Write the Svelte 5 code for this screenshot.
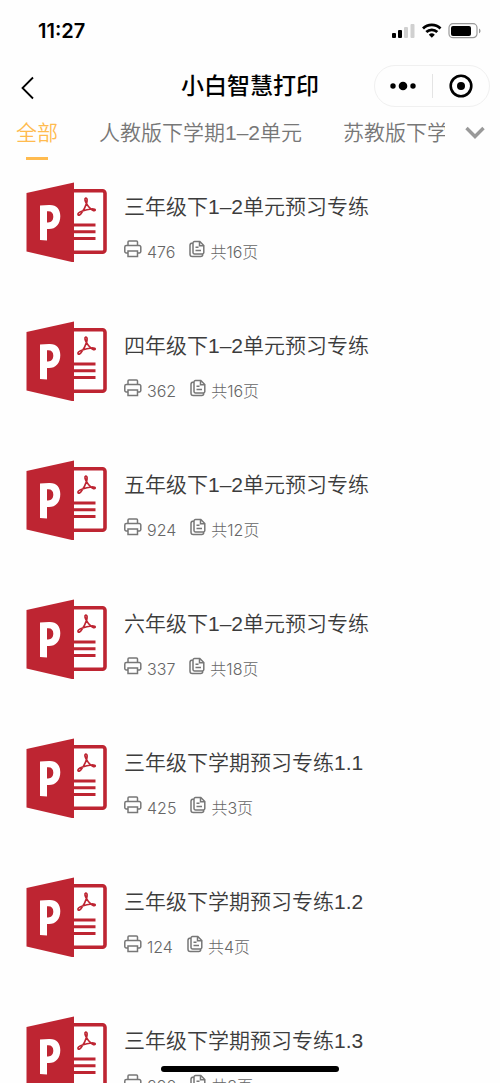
<script lang="ts">
	interface Doc {
		title: string,
		prints: number,
		pages: number,
	}

	const tabs = ['全部', '人教版下学期1–2单元', '苏教版下学期1–2单元'];
	let active = $state(0);

	const docs: Doc[] = [
		{ title: '三年级下1–2单元预习专练', prints: 476, pages: 16 },
		{ title: '四年级下1–2单元预习专练', prints: 362, pages: 16 },
		{ title: '五年级下1–2单元预习专练', prints: 924, pages: 12 },
		{ title: '六年级下1–2单元预习专练', prints: 337, pages: 18 },
		{ title: '三年级下学期预习专练1.1', prints: 425, pages: 3 },
		{ title: '三年级下学期预习专练1.2', prints: 124, pages: 4 },
		{ title: '三年级下学期预习专练1.3', prints: 290, pages: 3 },
	];
</script>

<div class="screen">
	<div class="status">
		<span class="time">11:27</span>
		<svg class="status-icons" width="90" height="18" viewBox="0 0 90 18" aria-hidden="true">
			<rect x="0" y="11" width="4" height="5" rx="1" />
			<rect x="6" y="8" width="4" height="8" rx="1" />
			<rect x="12" y="5" width="4" height="11" rx="1" fill="#d0d0d0" />
			<rect x="18.500" y="2" width="4" height="14" rx="1" fill="#d0d0d0" />
			<g fill="none" stroke="#000" stroke-width="2.800">
				<path d="M31 6.500a12.500 12.500 0 0 1 17.500 0" />
				<path d="M34.300 10a8 8 0 0 1 11 0" />
			</g>
			<path d="M39.800 15.800l-3-3.100a4.500 4.500 0 0 1 6 0z" />
			<rect x="57" y="1.700" width="28" height="14" rx="4" fill="none" stroke="#999" stroke-width="1.200" />
			<rect x="59" y="4" width="20" height="10" rx="2" />
			<path d="M87 6.500c2 .8 2 4 0 4.800z" fill="#999" />
		</svg>
	</div>

	<header class="nav">
		<button class="back" aria-label="返回">
			<svg width="14" height="24" viewBox="0 0 14 24"><path d="M13 1.500L2.500 12 13 22.500" fill="none" stroke="#000" stroke-width="1.800" /></svg>
		</button>
		<h1>小白智慧打印</h1>
		<div class="capsule">
			<button aria-label="更多">
				<svg width="26" height="10" viewBox="0 0 26 10"><circle cx="3" cy="5" r="2.700" /><circle cx="13" cy="5" r="4.300" /><circle cx="23" cy="5" r="2.700" /></svg>
			</button>
			<button aria-label="关闭">
				<svg width="24" height="24" viewBox="0 0 24 24"><circle cx="12" cy="12" r="10.300" fill="none" stroke="#000" stroke-width="2.600" /><circle cx="12" cy="12" r="4" /></svg>
			</button>
		</div>
	</header>

	<nav class="tabs">
		<div class="tab-list">
			{#each tabs as tab, index}
				<button class="tab" class:active={active === index} onclick={() => (active = index)}>{tab}</button>
			{/each}
		</div>
		<button class="expand" aria-label="展开">
			<svg width="20" height="14" viewBox="0 0 20 14"><path d="M1.500 2l8.500 8.500L18.500 2" fill="none" stroke="#999" stroke-width="3.400" /></svg>
		</button>
	</nav>

	<ul class="docs">
		{#each docs as doc}
			<li>
				<svg class="cover" width="81" height="80" viewBox="0 0 81 80" aria-hidden="true">
					<path d="M46 8.700h30.500a2.500 2.500 0 0 1 2.500 2.500v56.500a2.500 2.500 0 0 1-2.500 2.500H46" fill="#fff" stroke="#be2532" stroke-width="3.600" />
					<path d="M.5 11L48 .5v80L.5 69.500z" fill="#be2532" />
					<path d="M14 23.500l9-.5c7.500-.4 11.300 4.200 11.300 11.200 0 7.800-4.500 12.800-11.300 12.800h-2V58.500L14 58zM21 29.300v11.200c4.300.5 6.300-2 6.300-5.900 0-3.800-2-5.800-6.300-5.300z" fill="#fff" fill-rule="evenodd" />
					<path d="M48 43h21.500M48 49.700h21.500M48 56.500h21.500" stroke="#be2532" stroke-width="3" />
					<g fill="none" stroke="#be2532" stroke-width="1.700" stroke-linecap="round" stroke-linejoin="round">
						<path d="M60.500 21.500c-1.500-2.500-2.200-5-.8-5.300 1.700-.3 1.700 2.500.8 5.300-1.200 3.800-3.700 8-5.500 10.300-1 1.300-2.700 2-3 .8-.3-1.300 1.800-2.600 3.700-3.300 3.800-1.400 7-2.100 9.800-2.300 2.700-.2 4.100.4 3.600 1.300-.5.800-2.500.2-3.800-.9-2-1.600-3.700-3.600-4.800-5.900z" />
					</g>
				</svg>
				<div class="info">
					<h2>{doc.title}</h2>
					<div class="meta">
						<svg width="18" height="18" viewBox="0 0 18 18" aria-hidden="true">
							<path d="M4 5.500V2a1 1 0 0 1 1-1h7.500a1 1 0 0 1 1 1v3.500M4 13H2.200A1.400 1.400 0 0 1 .8 11.600V7a1.500 1.500 0 0 1 1.500-1.500h13A1.500 1.500 0 0 1 16.800 7v4.600a1.400 1.400 0 0 1-1.400 1.400h-1.900M4 11h9.500v5.500H4z" />
						</svg>
						<span>{doc.prints}</span>
						<svg class="pages" width="16" height="18" viewBox="0 0 16 18" aria-hidden="true">
							<path d="M5.500 1.500h5.300l4 4v7a1.500 1.500 0 0 1-1.500 1.500H5.500A1.500 1.500 0 0 1 4 12.500V3a1.500 1.500 0 0 1 1.500-1.500zM10.500 1.700v4h4M6.500 7.300h3M6.500 10.400h5.500M3.500 3C1.800 3 1 3.800 1 5.300v8.900a2.300 2.300 0 0 0 2.300 2.300h8.400c1.300 0 2-.7 2-2" />
						</svg>
						<span>共{doc.pages}页</span>
					</div>
				</div>
			</li>
		{/each}
	</ul>

	<div class="home"></div>
</div>

<style>
	:global(body) {
		background: #fefefe;
	}

	.screen {
		display: flex;
		flex-direction: column;
		height: 100vh;
		overflow: hidden;
		font-family: "Liberation Sans", "Noto Sans CJK SC", sans-serif;
		color: #333;
	}

	button {
		display: flex;
		align-items: center;
		justify-content: center;
		padding: 0;
		border: 0;
		background: none;
		font: inherit;
		color: inherit;
	}

	.status {
		display: flex;
		flex: none;
		align-items: center;
		justify-content: space-between;
		height: 62px;
		padding: 0 18px 0 38px;
	}

	.time {
		font-family: Inter, sans-serif;
		font-size: 20px;
		font-weight: 600;
		color: #000;
	}

	.nav {
		display: grid;
		flex: none;
		grid-template-columns: 1fr auto 1fr;
		align-items: center;
		height: 48px;
		padding: 0 10px 0 20px;
	}

	.back {
		justify-self: start;
		padding-top: 4px;
	}

	h1 {
		margin: 0;
		padding-right: 10px;
		font-size: 23px;
		font-weight: 500;
		line-height: 32px;
		color: #000;
	}

	.capsule {
		display: flex;
		justify-self: end;
		width: 114px;
		height: 40px;
		border: 1px solid #f0f0f0;
		border-radius: 21px;
	}

	.capsule button {
		flex: 1;
		margin: 8px 0;
	}

	.capsule button + button {
		border-left: 1px solid #e4e4e4;
	}

	.tabs {
		display: flex;
		flex: none;
		height: 50px;
		padding: 0 15px 0 16px;
	}

	.tab-list {
		display: flex;
		flex: 1;
		gap: 41px;
		overflow: hidden;
	}

	.tab {
		position: relative;
		flex: none;
		align-items: flex-start;
		padding-top: 8px;
		font-size: 21px;
		font-weight: 350;
		line-height: 30px;
		color: #777;
	}

	.tab.active {
		color: #ffbb4f;
	}

	.tab.active::after {
		position: absolute;
		bottom: 0;
		width: 22px;
		height: 3px;
		background: #ffbb4f;
		content: "";
	}

	.expand {
		height: 46px;
		margin-left: 20px;
	}

	.docs {
		flex: 1;
		min-height: 0;
		margin: 0;
		padding: 22px 26px 0;
		overflow: hidden;
		list-style: none;
	}

	li {
		display: flex;
		gap: 17px;
		height: 139px;
	}

	.cover {
		flex: none;
	}

	h2 {
		margin: 10px 0 14px;
		font-size: 21px;
		font-weight: 350;
		line-height: 30px;
		color: #3c3c3c;
	}

	.meta {
		display: flex;
		align-items: center;
		gap: 5px;
		font-family: Inter, "Noto Sans CJK SC", sans-serif;
		font-size: 16px;
		font-weight: 300;
		line-height: 32px;
		color: #666;
	}

	.meta svg {
		margin-bottom: 6px;
		fill: none;
		stroke: #777;
		stroke-width: 1.5;
	}

	.meta .pages {
		margin-left: 9px;
	}

	.home {
		position: fixed;
		bottom: 11px;
		left: 50%;
		width: 178px;
		height: 6px;
		border-radius: 3px;
		background: #000;
		transform: translateX(-50%);
	}
</style>
